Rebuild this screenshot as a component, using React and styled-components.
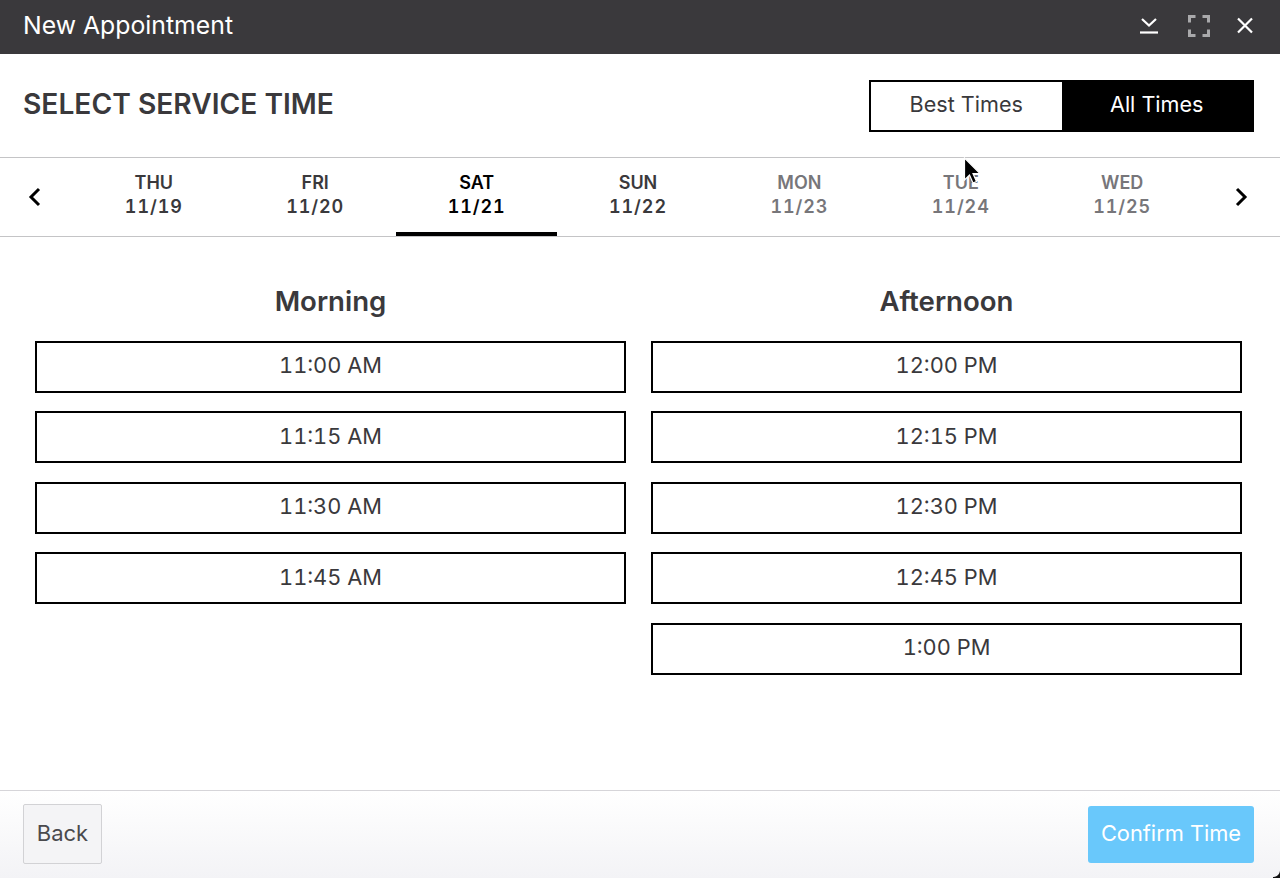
import React from 'react';
import styled, { createGlobalStyle } from 'styled-components';

const GlobalStyle = createGlobalStyle`
  html, body { margin: 0; padding: 0; background: #fff; }
  * { box-sizing: border-box; }
`;

const Page = styled.div`
  width: 1280px;
  height: 878px;
  display: flex;
  flex-direction: column;
  font-family: Inter, "Liberation Sans", sans-serif;
  color: #3a393c;
  overflow: hidden;
  position: relative;
`;

const TitleBar = styled.div`
  height: 54px;
  background: #3a393c;
  display: flex;
  align-items: center;
  justify-content: space-between;
  padding: 0 25px 4px 23px;
  color: #fff;
  font-size: 24.8px;
`;

const TitleIcons = styled.div`
  display: flex;
  align-items: center;
  gap: 25px;
  padding-top: 2px;

  & > svg:first-child {
    margin-right: 3px;
  }
`;

const Header = styled.div`
  height: 104px;
  display: flex;
  align-items: center;
  justify-content: space-between;
  padding: 0 26px 0 23px;
  border-bottom: 1px solid #c4c4c6;
`;

const Heading = styled.h1`
  margin: 0 0 3px;
  font-size: 28.2px;
  font-weight: 600;
`;

const Toggle = styled.div`
  display: flex;
  border: 2px solid #000;
  height: 52px;
  width: 385px;
`;

const ToggleOption = styled.div`
  flex: 1;
  display: flex;
  align-items: center;
  justify-content: center;
  font-size: 21.6px;
  padding-bottom: 4px;
  background: ${p => (p.$active ? '#000' : '#fff')};
  color: ${p => (p.$active ? '#fff' : '#3a393c')};
`;

const DateBar = styled.div`
  height: 79px;
  display: flex;
  align-items: stretch;
  justify-content: space-between;
  padding: 0 29px 0 25px;
  border-bottom: 1px solid #c4c4c6;
`;

const Arrow = styled.div`
  display: flex;
  align-items: center;
  width: 20px;
  justify-content: center;
`;

const Days = styled.div`
  display: flex;
  height: 78px;
`;

const Day = styled.div`
  width: 161.4px;
  padding-top: 13px;
  display: flex;
  flex-direction: column;
  align-items: center;
  font-size: 18px;
  font-weight: 600;
  line-height: 24px;
  color: ${p => (p.$active ? '#000' : p.$muted ? '#77767a' : '#3a393c')};
  border-bottom: 4px solid ${p => (p.$active ? '#000' : 'transparent')};
`;

const DayDate = styled.span`
  font-variant-numeric: tabular-nums;
  letter-spacing: 0.9px;
`;

const Slots = styled.div`
  flex: 1;
  display: grid;
  grid-template-columns: 591px 591px;
  column-gap: 25px;
  padding: 44px 38px 0 35px;
  align-content: start;
`;

const Column = styled.div`
  display: flex;
  flex-direction: column;
  gap: 18.5px;
`;

const ColumnTitle = styled.h2`
  margin: 0;
  height: 41px;
  text-align: center;
  font-size: 27.6px;
  font-weight: 600;
  line-height: 41px;
`;

const Slot = styled.div`
  height: 52px;
  border: 2px solid #000;
  display: flex;
  align-items: center;
  justify-content: center;
  font-size: 21.8px;
  font-variant-numeric: tabular-nums;
  padding-bottom: 3px;
`;

const Footer = styled.div`
  height: 88px;
  border-top: 1px solid #d6d5d9;
  display: flex;
  align-items: center;
  justify-content: space-between;
  padding: 0 26px 1px 23px;
  background: linear-gradient(#fff, #f3f3f6);
`;

const BackButton = styled.div`
  width: 79px;
  height: 60px;
  border: 1px solid #d2d2d5;
  border-radius: 2px;
  background: #f4f4f6;
  color: #4a4a4d;
  display: flex;
  align-items: center;
  justify-content: center;
  font-size: 22px;
  padding-bottom: 2px;
`;

const ConfirmButton = styled.div`
  width: 166px;
  height: 57px;
  border-radius: 3px;
  background: #69c8fb;
  color: #fff;
  display: flex;
  align-items: center;
  justify-content: center;
  font-size: 21.8px;
  padding-bottom: 2px;
`;

const Cursor = styled.svg`
  position: absolute;
  left: 963px;
  top: 157px;
`;

const WindowCorner = styled.div`
  position: absolute;
  right: 0;
  bottom: 0;
  width: 7px;
  height: 8px;
  background: radial-gradient(circle at 0 0, transparent 6.500px, #111 7.500px);
`;

const days = [
  ['THU', '11/19'],
  ['FRI', '11/20'],
  ['SAT', '11/21', 'active'],
  ['SUN', '11/22'],
  ['MON', '11/23', 'muted'],
  ['TUE', '11/24', 'muted'],
  ['WED', '11/25', 'muted'],
];

const morning = ['11:00 AM', '11:15 AM', '11:30 AM', '11:45 AM'];
const afternoon = ['12:00 PM', '12:15 PM', '12:30 PM', '12:45 PM', '1:00 PM'];

export default function App() {
  return (
    <Page>
      <GlobalStyle />
      <TitleBar>
        New Appointment
        <TitleIcons>
          <svg width="22" height="22" viewBox="0 0 22 22" fill="none" stroke="#fff" strokeWidth="2.2">
            <path d="M4 4l7 6.500L18 4" />
            <path d="M2 17.500h18" />
          </svg>
          <svg width="22" height="22" viewBox="0 0 22 22" fill="none" stroke="#a9a9ab" strokeWidth="3">
            <path d="M1.500 7.500v-6h6M14.500 1.500h6v6M20.500 14.500v6h-6M7.500 20.500h-6v-6" />
          </svg>
          <svg width="20" height="20" viewBox="0 0 20 20" fill="none" stroke="#fff" strokeWidth="2.2">
            <path d="M3 2.500l14 14M17 2.500l-14 14" />
          </svg>
        </TitleIcons>
      </TitleBar>
      <Header>
        <Heading>SELECT SERVICE TIME</Heading>
        <Toggle>
          <ToggleOption>Best Times</ToggleOption>
          <ToggleOption $active>All Times</ToggleOption>
        </Toggle>
      </Header>
      <DateBar>
        <Arrow>
          <svg width="14" height="22" viewBox="0 0 14 22" fill="none" stroke="#000" strokeWidth="3">
            <path d="M11 3l-8 8 8 8" />
          </svg>
        </Arrow>
        <Days>
          {days.map(([name, date, state]) => (
            <Day key={name} $active={state === 'active'} $muted={state === 'muted'}>
              <span>{name}</span>
              <DayDate>{date}</DayDate>
            </Day>
          ))}
        </Days>
        <Arrow>
          <svg width="14" height="22" viewBox="0 0 14 22" fill="none" stroke="#000" strokeWidth="3">
            <path d="M3 3l8 8-8 8" />
          </svg>
        </Arrow>
      </DateBar>
      <Slots>
        <Column>
          <ColumnTitle>Morning</ColumnTitle>
          {morning.map(t => <Slot key={t}>{t}</Slot>)}
        </Column>
        <Column>
          <ColumnTitle>Afternoon</ColumnTitle>
          {afternoon.map(t => <Slot key={t}>{t}</Slot>)}
        </Column>
      </Slots>
      <Footer>
        <BackButton>Back</BackButton>
        <ConfirmButton>Confirm Time</ConfirmButton>
      </Footer>
      <WindowCorner />
      <Cursor width="18" height="30" viewBox="0 0 18 30">
        <path d="M1.500 1v22l5-5 3.500 8 3.500-1.500-3.500-8h7z" fill="#000" stroke="#fff" strokeWidth="1.200" />
      </Cursor>
    </Page>
  );
}
